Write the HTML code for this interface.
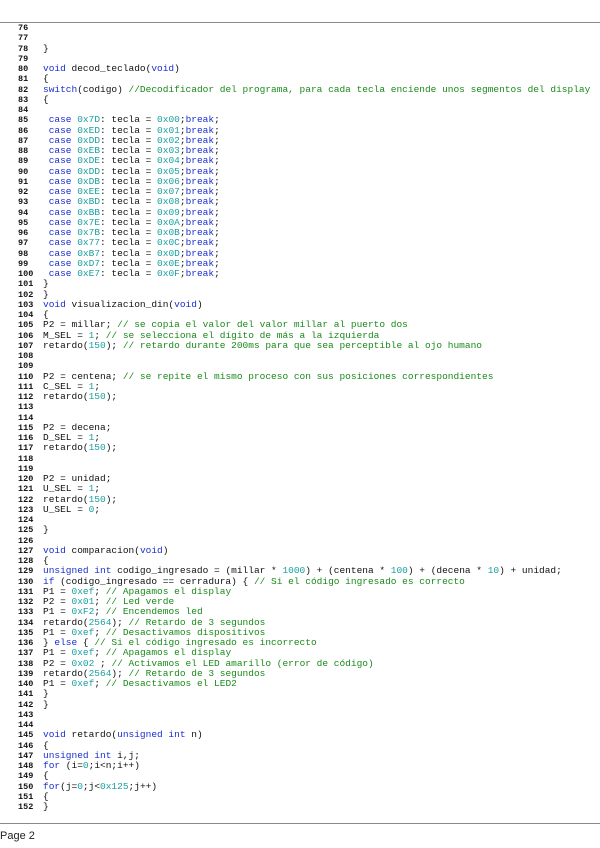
<!DOCTYPE html>
<html><head><meta charset="utf-8"><style>
body{margin:0;width:600px;height:848px;background:#fff;position:relative;overflow:hidden}
.hr{position:absolute;left:0;width:600px;height:1px;background:#888}
#c{position:absolute;left:0;top:23px;font-family:"Liberation Mono",monospace;font-size:9.5px;line-height:10.25px;color:#111;white-space:pre}
.r{display:block;height:10.25px}
.n{display:inline-block;width:43px;padding-left:18px;box-sizing:border-box;font-weight:bold;font-size:8.5px}
.k{color:#1a2fd0}.g{color:#1a8a1a}.t{color:#1aa0a0}
#p{position:absolute;left:0;top:830px;font-family:"Liberation Sans",sans-serif;font-size:11px;color:#222}
</style></head><body>
<div class="hr" style="top:22px"></div>
<div class="hr" style="top:823px"></div>
<div id="c"><span class="r"><span class="n">76</span></span><span class="r"><span class="n">77</span></span><span class="r"><span class="n">78</span>}</span><span class="r"><span class="n">79</span></span><span class="r"><span class="n">80</span><span class="k">void</span> decod_teclado(<span class="k">void</span>)</span><span class="r"><span class="n">81</span>{</span><span class="r"><span class="n">82</span><span class="k">switch</span>(codigo) <span class="g">//Decodificador del programa, para cada tecla enciende unos segmentos del display</span></span><span class="r"><span class="n">83</span>{</span><span class="r"><span class="n">84</span></span><span class="r"><span class="n">85</span> <span class="k">case</span> <span class="t">0x7D</span>: tecla = <span class="t">0x00</span>;<span class="k">break</span>;</span><span class="r"><span class="n">86</span> <span class="k">case</span> <span class="t">0xED</span>: tecla = <span class="t">0x01</span>;<span class="k">break</span>;</span><span class="r"><span class="n">87</span> <span class="k">case</span> <span class="t">0xDD</span>: tecla = <span class="t">0x02</span>;<span class="k">break</span>;</span><span class="r"><span class="n">88</span> <span class="k">case</span> <span class="t">0xEB</span>: tecla = <span class="t">0x03</span>;<span class="k">break</span>;</span><span class="r"><span class="n">89</span> <span class="k">case</span> <span class="t">0xDE</span>: tecla = <span class="t">0x04</span>;<span class="k">break</span>;</span><span class="r"><span class="n">90</span> <span class="k">case</span> <span class="t">0xDD</span>: tecla = <span class="t">0x05</span>;<span class="k">break</span>;</span><span class="r"><span class="n">91</span> <span class="k">case</span> <span class="t">0xDB</span>: tecla = <span class="t">0x06</span>;<span class="k">break</span>;</span><span class="r"><span class="n">92</span> <span class="k">case</span> <span class="t">0xEE</span>: tecla = <span class="t">0x07</span>;<span class="k">break</span>;</span><span class="r"><span class="n">93</span> <span class="k">case</span> <span class="t">0xBD</span>: tecla = <span class="t">0x08</span>;<span class="k">break</span>;</span><span class="r"><span class="n">94</span> <span class="k">case</span> <span class="t">0xBB</span>: tecla = <span class="t">0x09</span>;<span class="k">break</span>;</span><span class="r"><span class="n">95</span> <span class="k">case</span> <span class="t">0x7E</span>: tecla = <span class="t">0x0A</span>;<span class="k">break</span>;</span><span class="r"><span class="n">96</span> <span class="k">case</span> <span class="t">0x7B</span>: tecla = <span class="t">0x0B</span>;<span class="k">break</span>;</span><span class="r"><span class="n">97</span> <span class="k">case</span> <span class="t">0x77</span>: tecla = <span class="t">0x0C</span>;<span class="k">break</span>;</span><span class="r"><span class="n">98</span> <span class="k">case</span> <span class="t">0xB7</span>: tecla = <span class="t">0x0D</span>;<span class="k">break</span>;</span><span class="r"><span class="n">99</span> <span class="k">case</span> <span class="t">0xD7</span>: tecla = <span class="t">0x0E</span>;<span class="k">break</span>;</span><span class="r"><span class="n">100</span> <span class="k">case</span> <span class="t">0xE7</span>: tecla = <span class="t">0x0F</span>;<span class="k">break</span>;</span><span class="r"><span class="n">101</span>}</span><span class="r"><span class="n">102</span>}</span><span class="r"><span class="n">103</span><span class="k">void</span> visualizacion_din(<span class="k">void</span>)</span><span class="r"><span class="n">104</span>{</span><span class="r"><span class="n">105</span>P2 = millar; <span class="g">// se copia el valor del valor millar al puerto dos</span></span><span class="r"><span class="n">106</span>M_SEL = <span class="t">1</span>; <span class="g">// se selecciona el dígito de más a la izquierda</span></span><span class="r"><span class="n">107</span>retardo(<span class="t">150</span>); <span class="g">// retardo durante 200ms para que sea perceptible al ojo humano</span></span><span class="r"><span class="n">108</span></span><span class="r"><span class="n">109</span></span><span class="r"><span class="n">110</span>P2 = centena; <span class="g">// se repite el mismo proceso con sus posiciones correspondientes</span></span><span class="r"><span class="n">111</span>C_SEL = <span class="t">1</span>;</span><span class="r"><span class="n">112</span>retardo(<span class="t">150</span>);</span><span class="r"><span class="n">113</span></span><span class="r"><span class="n">114</span></span><span class="r"><span class="n">115</span>P2 = decena;</span><span class="r"><span class="n">116</span>D_SEL = <span class="t">1</span>;</span><span class="r"><span class="n">117</span>retardo(<span class="t">150</span>);</span><span class="r"><span class="n">118</span></span><span class="r"><span class="n">119</span></span><span class="r"><span class="n">120</span>P2 = unidad;</span><span class="r"><span class="n">121</span>U_SEL = <span class="t">1</span>;</span><span class="r"><span class="n">122</span>retardo(<span class="t">150</span>);</span><span class="r"><span class="n">123</span>U_SEL = <span class="t">0</span>;</span><span class="r"><span class="n">124</span></span><span class="r"><span class="n">125</span>}</span><span class="r"><span class="n">126</span></span><span class="r"><span class="n">127</span><span class="k">void</span> comparacion(<span class="k">void</span>)</span><span class="r"><span class="n">128</span>{</span><span class="r"><span class="n">129</span><span class="k">unsigned int</span> codigo_ingresado = (millar * <span class="t">1000</span>) + (centena * <span class="t">100</span>) + (decena * <span class="t">10</span>) + unidad;</span><span class="r"><span class="n">130</span><span class="k">if</span> (codigo_ingresado == cerradura) { <span class="g">// Si el código ingresado es correcto</span></span><span class="r"><span class="n">131</span>P1 = <span class="t">0xef</span>; <span class="g">// Apagamos el display</span></span><span class="r"><span class="n">132</span>P2 = <span class="t">0x01</span>; <span class="g">// Led verde</span></span><span class="r"><span class="n">133</span>P1 = <span class="t">0xF2</span>; <span class="g">// Encendemos led</span></span><span class="r"><span class="n">134</span>retardo(<span class="t">2564</span>); <span class="g">// Retardo de 3 segundos</span></span><span class="r"><span class="n">135</span>P1 = <span class="t">0xef</span>; <span class="g">// Desactivamos dispositivos</span></span><span class="r"><span class="n">136</span>} <span class="k">else</span> { <span class="g">// Si el código ingresado es incorrecto</span></span><span class="r"><span class="n">137</span>P1 = <span class="t">0xef</span>; <span class="g">// Apagamos el display</span></span><span class="r"><span class="n">138</span>P2 = <span class="t">0x02</span> ; <span class="g">// Activamos el LED amarillo (error de código)</span></span><span class="r"><span class="n">139</span>retardo(<span class="t">2564</span>); <span class="g">// Retardo de 3 segundos</span></span><span class="r"><span class="n">140</span>P1 = <span class="t">0xef</span>; <span class="g">// Desactivamos el LED2</span></span><span class="r"><span class="n">141</span>}</span><span class="r"><span class="n">142</span>}</span><span class="r"><span class="n">143</span></span><span class="r"><span class="n">144</span></span><span class="r"><span class="n">145</span><span class="k">void</span> retardo(<span class="k">unsigned int</span> n)</span><span class="r"><span class="n">146</span>{</span><span class="r"><span class="n">147</span><span class="k">unsigned int</span> i,j;</span><span class="r"><span class="n">148</span><span class="k">for</span> (i=<span class="t">0</span>;i&lt;n;i++)</span><span class="r"><span class="n">149</span>{</span><span class="r"><span class="n">150</span><span class="k">for</span>(j=<span class="t">0</span>;j&lt;<span class="t">0x125</span>;j++)</span><span class="r"><span class="n">151</span>{</span><span class="r"><span class="n">152</span>}</span></div>
<div id="p">Page 2</div>
</body></html>
